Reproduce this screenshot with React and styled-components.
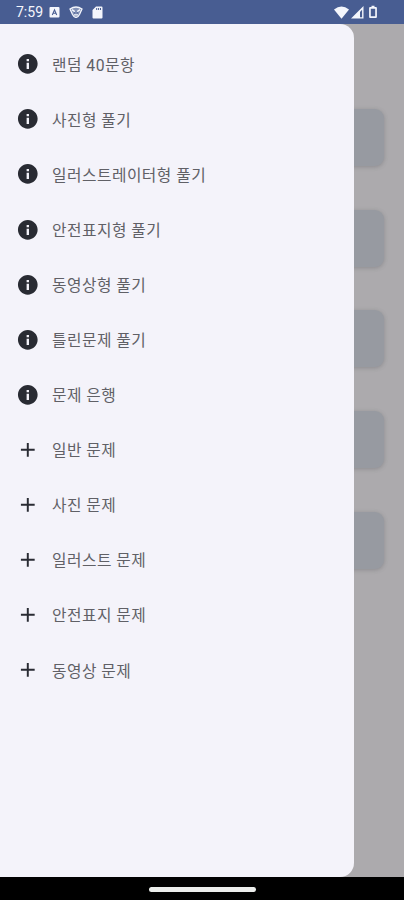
import React from 'react';

import styled, { createGlobalStyle } from 'styled-components';

const GlobalStyle = createGlobalStyle`
  body {
    margin: 0;
    font-family: Roboto, 'Noto Sans CJK KR', sans-serif;
  }
`;

const Screen = styled.div`
  display: flex;
  flex-direction: column;
  width: 404px;
  height: 900px;
  overflow: hidden;
  background: #000;
`;

const StatusBar = styled.header`
  display: flex;
  align-items: center;
  justify-content: space-between;
  box-sizing: border-box;
  flex: 0 0 24px;
  padding: 0 25px 0 16px;
  background: #485d92;
  color: #f4f6fc;
`;

const StatusGroup = styled.div`
  display: flex;
  align-items: center;
  gap: ${({ $gap }) => $gap};
`;

const Clock = styled.span`
  width: 27px;
  margin-right: 6px;
  font-size: 14px;
  line-height: 24px;
  white-space: nowrap;
`;

const StatusIcon = styled.svg`
  display: block;
  fill: currentColor;
`;

const Body = styled.main`
  position: relative;
  flex: 0 0 853px;
  background: #acaaad;
`;

const CardList = styled.div`
  display: flex;
  flex-direction: column;
  gap: 43.7px;
  padding: 85px 20px 0;
`;

const Card = styled.div`
  height: 57px;
  border-radius: 9px;
  background: #979aa1;
  box-shadow: 0 1px 4px rgba(70, 70, 76, 0.3);
`;

const Drawer = styled.nav`
  position: absolute;
  top: 0;
  left: 0;
  box-sizing: border-box;
  width: 354px;
  height: 100%;
  padding-top: 12.5px;
  border-radius: 0 14px 14px 0;
  background: #f4f3fa;
`;

const MenuItem = styled.a`
  display: flex;
  align-items: center;
  gap: 12.4px;
  height: 55.1px;
  padding-left: 16px;
  color: #606066;
`;

const MenuIcon = styled.svg`
  flex: none;
  width: 23.6px;
  height: 23.6px;
  fill: #292b33;
`;

const MenuLabel = styled.span`
  padding-top: 3px;
  font-size: 15.75px;
  font-weight: 400;
  letter-spacing: 0.49px;
  line-height: 24px;
  white-space: nowrap;
`;

const NavigationBar = styled.footer`
  display: flex;
  align-items: center;
  justify-content: center;
  flex: 1;
  padding-top: 1px;
`;

const HomeHandle = styled.div`
  width: 107px;
  height: 5px;
  border-radius: 3px;
  background: #eceeec;
`;

const icons = {
  info: 'M12 2C6.48 2 2 6.48 2 12s4.48 10 10 10 10-4.48 10-10S17.52 2 12 2zm1.2 15.2h-2.4V11h2.4v6.2zm0-7.8h-2.4V7h2.4v2.4z',
  add: 'M19 13h-6v6h-2v-6H5v-2h6V5h2v6h6v2z',
};

const menu = [
  { icon: 'info', label: '랜덤 40문항' },
  { icon: 'info', label: '사진형 풀기' },
  { icon: 'info', label: '일러스트레이터형 풀기' },
  { icon: 'info', label: '안전표지형 풀기' },
  { icon: 'info', label: '동영상형 풀기' },
  { icon: 'info', label: '틀린문제 풀기' },
  { icon: 'info', label: '문제 은행' },
  { icon: 'add', label: '일반 문제' },
  { icon: 'add', label: '사진 문제' },
  { icon: 'add', label: '일러스트 문제' },
  { icon: 'add', label: '안전표지 문제' },
  { icon: 'add', label: '동영상 문제' },
];

function Status() {
  return (
    <StatusBar>
      <StatusGroup $gap="0">
        <Clock>7:59</Clock>
        <StatusGroup $gap="9px">
          <StatusIcon width="11" height="12" viewBox="0 0 11 12">
            <rect x="0.5" y="1" width="10" height="10.5" rx="1" />
            <path d="M3.3 9 5.5 3.8 7.7 9M4.2 7.3h2.6" fill="none" stroke="#485d92" strokeWidth="1.1" />
          </StatusIcon>
          <StatusIcon width="14" height="12" viewBox="0 0 14 12">
            <path
              d="M1 3Q7-1 13 3L10.5 8.5Q9 11.4 7 11.4T3.5 8.5Z"
              fillOpacity="0.35"
              stroke="currentColor"
              strokeWidth="1.3"
            />
            <path d="M3 3.6 5.8 5.6M11 3.6 8.2 5.6M5 8.8h4" fill="none" stroke="currentColor" strokeWidth="1.3" />
            <circle cx="5.6" cy="6.9" r="0.7" fill="#485d92" />
            <circle cx="8.4" cy="6.9" r="0.7" fill="#485d92" />
          </StatusIcon>
          <StatusIcon width="11" height="13" viewBox="0 0 11 13">
            <path
              d="M4 0.5h5.5a1 1 0 0 1 1 1v10a1 1 0 0 1-1 1h-8a1 1 0 0 1-1-1V4ZM4.2 2v2h1V2ZM6.1 2v2h1V2ZM8 2v2h1V2Z"
              fillRule="evenodd"
            />
          </StatusIcon>
        </StatusGroup>
      </StatusGroup>
      <StatusGroup $gap="3px">
        <StatusGroup $gap="2px">
          <StatusIcon width="15" height="13" viewBox="0 0 15 13">
            <path d="M0 3.4Q7.5-2.2 15 3.4L7.5 12.7Z" />
          </StatusIcon>
          <StatusIcon width="13" height="13" viewBox="0 0 13 13">
            <path d="M0 12.5 12.5 0v12.5ZM9 6v5.2h2.1V3.8Z" fillRule="evenodd" />
          </StatusIcon>
        </StatusGroup>
        <StatusIcon width="12" height="14" viewBox="0 0 12 14">
          <path d="M4.5 0.7h3V2h1.4q1 0 1 1v9q0 1-1 1H3.1q-1 0-1-1V3q0-1 1-1h1.4ZM3.8 3.8v7.4h4.4V3.8Z" fillRule="evenodd" />
        </StatusIcon>
      </StatusGroup>
    </StatusBar>
  );
}

export default function App() {
  return (
    <Screen>
      <GlobalStyle />
      <Status />
      <Body>
        <CardList>
          {[1, 2, 3, 4, 5].map((id) => (
            <Card key={id} />
          ))}
        </CardList>
        <Drawer>
          {menu.map(({ icon, label }) => (
            <MenuItem key={label}>
              <MenuIcon viewBox="0 0 24 24">
                <path d={icons[icon]} />
              </MenuIcon>
              <MenuLabel>{label}</MenuLabel>
            </MenuItem>
          ))}
        </Drawer>
      </Body>
      <NavigationBar>
        <HomeHandle />
      </NavigationBar>
    </Screen>
  );
}
